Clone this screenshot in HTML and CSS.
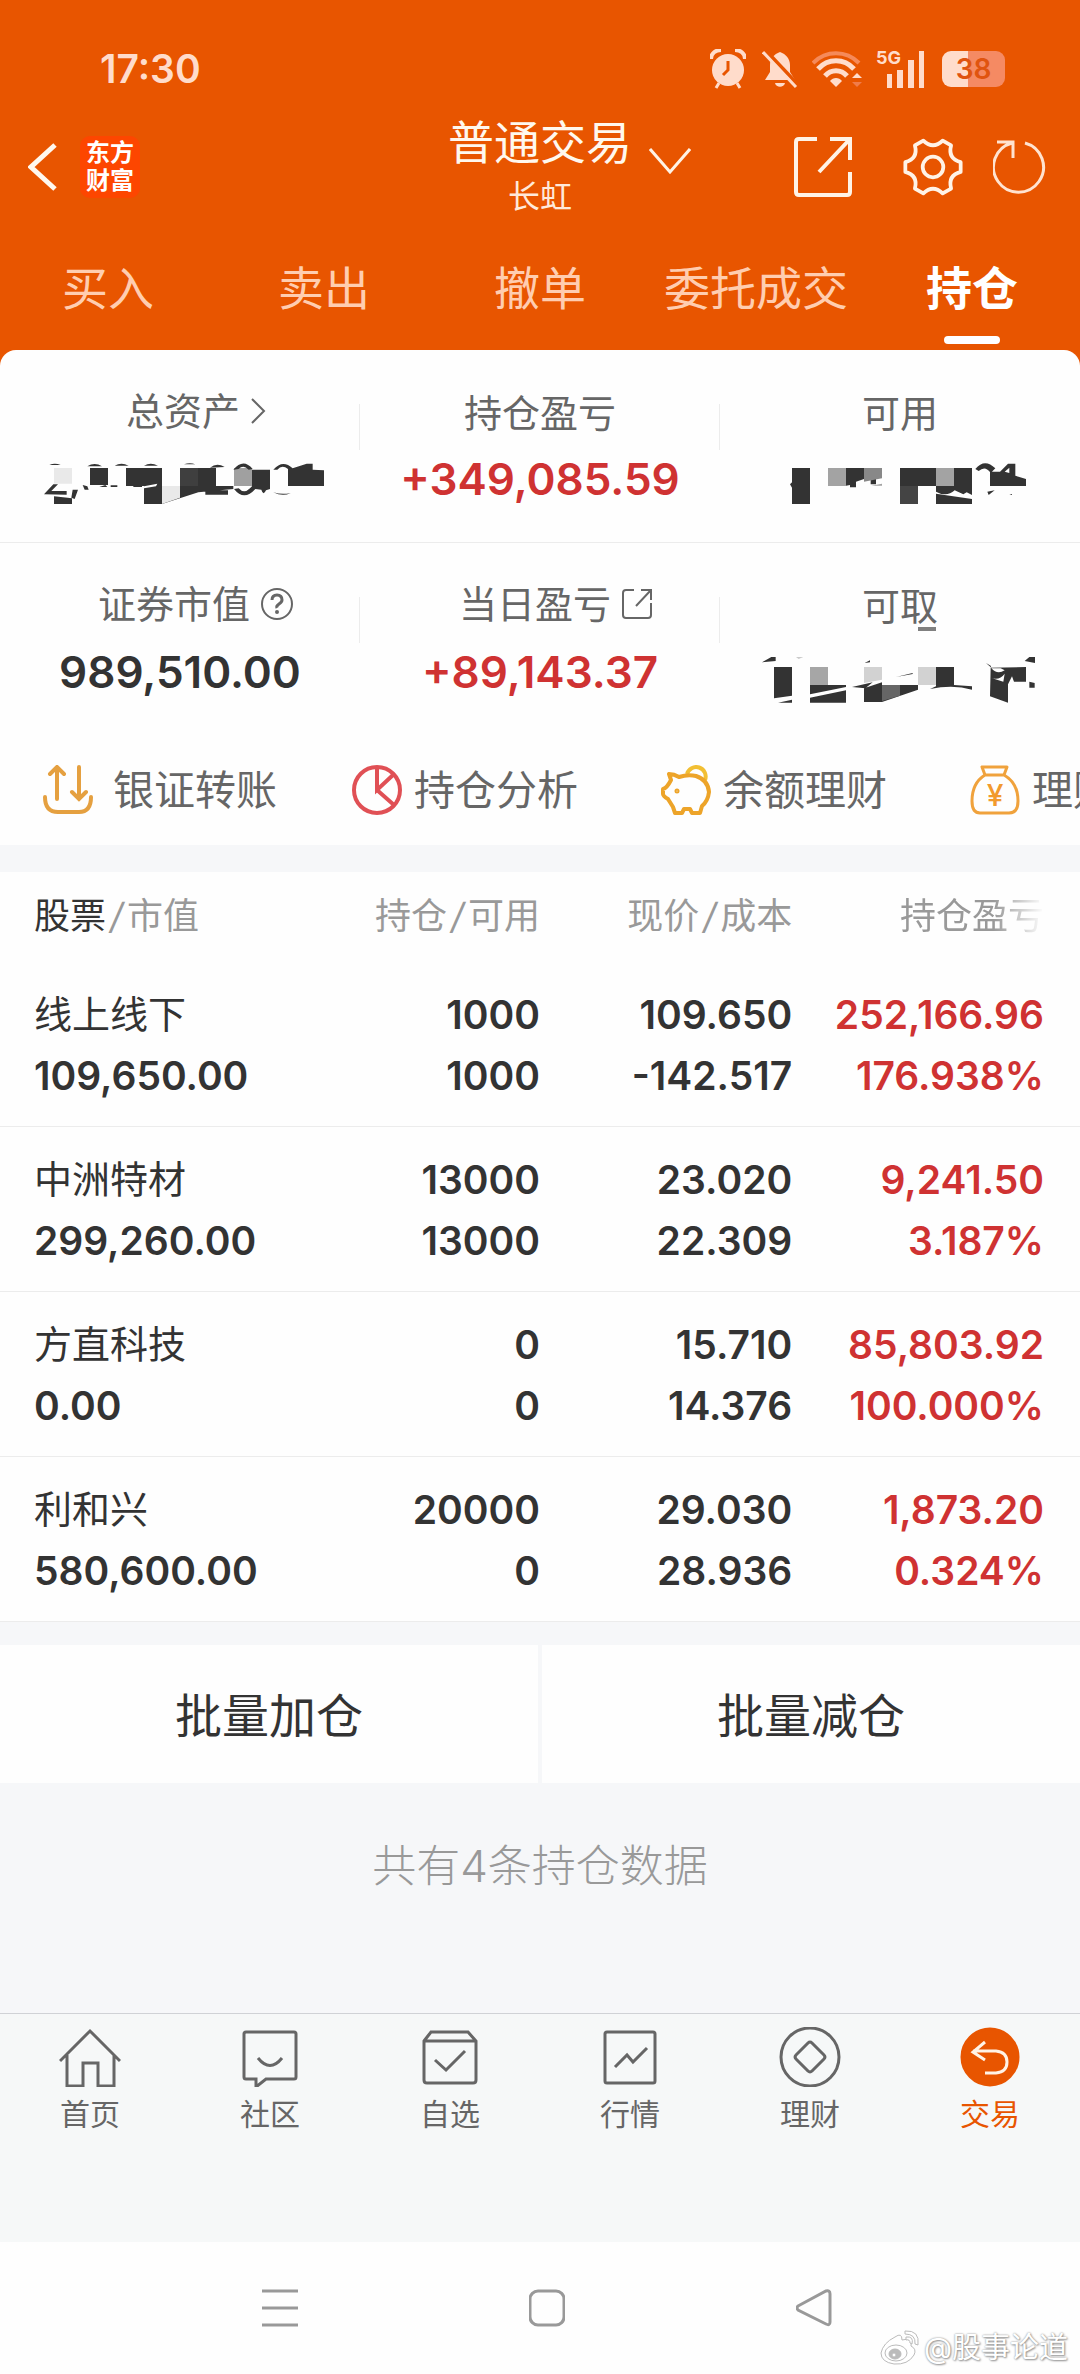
FILE: index.html
```html
<!DOCTYPE html>
<html lang="zh-CN">
<head>
  <meta charset="UTF-8">
  <meta name="viewport" content="width=device-width, initial-scale=1.0">
  <title>普通交易 - 持仓</title>
  <link rel="stylesheet" href="styles.css">
</head>
<body>
  <div class="app">
    <header class="header">
      <div class="status-bar">
        <span class="time">17:30</span>
        <div class="status-icons">
          <svg class="alarm" width="36" height="40" viewBox="0 0 36 40">
            <circle cx="18" cy="21" r="16" fill="#ffdccb"/>
            <path d="M1 10C1 4 6 1 11 1M35 10C35 4 30 1 25 1" fill="none" stroke="#ffdccb" stroke-width="4"/>
            <path d="M9 34L6 39M27 34L30 39" stroke="#ffdccb" stroke-width="3"/>
            <path d="M18 12V21L13 26" fill="none" stroke="#e85500" stroke-width="3"/>
          </svg>
          <svg class="bell" width="36" height="38" viewBox="0 0 36 38">
            <path d="M18 2C24 4 28 9 28 15V22L33 30H3L8 22V15C8 9 12 4 18 2ZM13 33H23C22 38 14 38 13 33Z" fill="#ffdccb"/>
            <path d="M4 1L37 36" stroke="#e85500" stroke-width="4"/>
            <path d="M1 2L34 37" stroke="#ffdccb" stroke-width="3"/>
          </svg>
          <svg class="wifi" width="50" height="38" viewBox="0 0 50 38">
            <path d="M1 13C14 0 34 0 47 13" fill="none" stroke="#f58a5a" stroke-width="4"/>
            <path d="M6 19C16 8 32 8 42 19M13 26C19 19 29 19 35 26" fill="none" stroke="#ffdccb" stroke-width="5"/>
            <path d="M18 31C21 27 27 27 30 31L24 37Z" fill="#ffdccb"/>
            <path d="M40 28L45 23L50 28Z" fill="#ffdccb"/>
            <path d="M40 32L45 37L50 32Z" fill="#f07c4a"/>
          </svg>
          <div class="signal">
            <span>5G</span>
            <svg width="38" height="38" viewBox="0 0 38 38">
              <path d="M1 24H6V38H1ZM11 20H17V38H11ZM22 10H28V38H22ZM33 1H38V38H33Z" fill="#ffdccb"/>
            </svg>
          </div>
          <span class="battery">38</span>
        </div>
      </div>

      <div class="nav-bar">
        <div class="nav-left">
          <button class="icon-btn" aria-label="返回">
            <svg width="30" height="50" viewBox="0 0 30 50"><path d="M27 3L3 25L27 47" fill="none" stroke="#fff8ee" stroke-width="5"/></svg>
          </button>
          <div class="logo">东方<br>财富</div>
        </div>
        <div class="nav-title">
          <h1>普通交易</h1>
          <p>长虹</p>
        </div>
        <div class="nav-right">
          <button class="icon-btn arrow-down" aria-label="切换账户">
            <svg width="42" height="28" viewBox="0 0 42 28"><path d="M1 2L21 25L41 2" fill="none" stroke="#fff3e6" stroke-width="3"/></svg>
          </button>
          <button class="icon-btn share" aria-label="分享">
            <svg width="58" height="60" viewBox="0 0 58 60"><path d="M23 2H5Q2 2 2 5V55Q2 58 5 58H53Q56 58 56 55V35M36 2H56V23M56 2L25 35" fill="none" stroke="#fff3e6" stroke-width="4"/></svg>
          </button>
          <button class="icon-btn settings" aria-label="设置">
            <svg width="60" height="60" viewBox="-2 -2 64 64"><path d="M40.3 1.8L49.3 7Q45.6 21 59.5 24.8V35.2Q45.6 39 49.3 53L40.3 58.2Q30 48 19.7 58.2L10.7 53Q14.4 39 .5 35.2V24.8Q14.4 21 10.7 7L19.7 1.8Q30 12 40.3 1.8Z" fill="none" stroke="#fff3e6" stroke-width="4" stroke-linejoin="round"/><circle cx="30" cy="30" r="11" fill="none" stroke="#fff3e6" stroke-width="4"/></svg>
          </button>
          <button class="icon-btn" aria-label="刷新">
            <svg width="54" height="56" viewBox="0 0 54 56"><path d="M32 4A25 25 0 1 1 19 4M4 3H20V19" fill="none" stroke="#ffe3d0" stroke-width="3"/></svg>
          </button>
        </div>
      </div>

      <nav class="tabs">
        <a href="#">买入</a>
        <a href="#">卖出</a>
        <a href="#">撤单</a>
        <a href="#">委托成交</a>
        <a href="#" class="active">持仓</a>
      </nav>
    </header>

    <div class="panel-wrap">
      <section class="panel">
        <div class="summary">
          <div class="cell">
            <div class="label has-icon">总资产
              <svg width="16" height="26" viewBox="0 0 16 26"><path d="M2 1L14 13L2 25" fill="none" stroke="#666" stroke-width="2"/></svg>
            </div>
            <!-- hidden amount -->
            <svg class="masked" width="310" height="44" viewBox="-15 24 930 132" fill="#333">
              <path d="M58 30Q74 22 92 30ZM172 34Q194 20 216 34ZM254 32Q274 20 296 32ZM342 32Q362 20 384 32ZM462 28Q480 22 496 28ZM540 38Q560 22 584 36Z"/>
              <path d="M180 39H234V90H180ZM288 39H396V93H288ZM558 39V93L610 93V102L505 112L396 147H342V93H450V39ZM526 106H594V119H526ZM42 118L70 88H84L64 108H110V119ZM72 124L126 130V147H72ZM128 104H144L134 132L124 128ZM158 90L172 94L176 104H164ZM208 96L226 90L232 96ZM242 91H262V96H242ZM310 90H336V96H310Z"/>
              <path d="M342 94L382 86L378 94L342 100Z" fill="#fefefe"/>
              <path d="M450 39H504V93H450Z" fill="#3f3f3f"/>
              <path d="M72 39H126V86H72ZM396 93H450V128L396 147Z" fill="#e9e9e9"/>
              <path d="M612 39H666V93H612Z" fill="#a0a0a0"/>
              <path d="M610 44Q640 8 668 42L656 44Q640 28 626 42ZM666 44H720V102L708 106Q700 124 694 104L676 102Q642 140 612 102L626 100Q642 118 660 100L666 94ZM730 44Q758 12 788 40L830 26H848V44L882 46V93H774V42Q756 28 742 44ZM730 112Q756 120 782 114Q758 126 730 112Z"/>
            </svg>
          </div>
          <div class="cell">
            <div class="label">持仓盈亏</div>
            <div class="value red">+349,085.59</div>
          </div>
          <div class="cell">
            <div class="label">可用</div>
            <svg class="masked" width="310" height="44" viewBox="-15 24 930 132" fill="#333">
              <path d="M126 39H180V147H126ZM120 88L126 82V98ZM288 39H342V72L318 80V97H300V90L288 92ZM362 72H378V88H362ZM450 39H666V120L650 112L640 118L614 106Q590 128 558 110V93H450ZM558 116L666 132V147H558ZM676 42Q704 8 736 40L722 54Q706 30 686 48ZM720 50H750L774 26H796V62L828 72V93H720ZM712 110L734 106L716 120ZM778 119L786 117V120Z"/>
              <path d="M764 50L778 38V54Z" fill="#fefefe"/>
              <path d="M234 39H288V93H234ZM558 39H612V93H558ZM364 92L396 86V92Z" fill="#a3a3a3"/>
              <path d="M342 39H396V70L342 80Z" fill="#888"/>
              <path d="M450 93H504V147H450Z" fill="#444"/>
            </svg>
          </div>
        </div>

        <div class="summary">
          <div class="cell">
            <div class="label has-icon">证券市值
              <svg width="34" height="34" viewBox="0 0 34 34" fill="none" stroke="#666" stroke-width="2"><circle cx="17" cy="17" r="15"/><path d="M12 13Q12 8 17 8T22 13Q22 15 19 17T17 21" stroke-width="3"/><circle cx="17" cy="25" r="1"/></svg>
            </div>
            <div class="value">989,510.00</div>
          </div>
          <div class="cell">
            <div class="label has-icon">当日盈亏
              <svg width="32" height="32" viewBox="0 0 32 32" fill="none" stroke="#666" stroke-width="2"><path d="M13 2H5Q2 2 2 5V27Q2 30 5 30H27Q30 30 30 27V15M20 2H30V12M30 2L15 18"/></svg>
            </div>
            <div class="value red">+89,143.37</div>
          </div>
          <div class="cell">
            <div class="label">可取</div>
            <svg class="masked" width="310" height="46" viewBox="-15 225 930 138" fill="#333">
              <path d="M504 138H558V150H504Z" fill="#808080"/>
              <path d="M36 244L64 228H77V240ZM138 230H160L146 232ZM72 258H126V344L72 352ZM84 365L126 356V365ZM180 312H288V318L180 340ZM180 350L288 328V365H180ZM344 246L360 238V244ZM306 318L368 304L346 322ZM342 322L396 304V312H504V326L396 363H342ZM438 288L488 276V279ZM558 258H612V312L666 316V326Q610 310 540 324L558 316ZM722 260L828 258V302H792L786 286L774 310V365L720 346ZM824 240L838 228H855V246ZM838 302L854 306V320H838ZM708 246L722 254L724 260Z"/>
              <path d="M724 262Q742 282 764 268L752 262ZM722 290Q748 300 764 278L760 302Z" fill="#fefefe"/>
              <path d="M180 258H234V312H180Z" fill="#a6a6a6"/>
              <path d="M342 258H396V296L342 306ZM504 258H558V312H504Z" fill="#d2d2d2"/>
              <path d="M396 312H450V344L396 360Z" fill="#666"/>
            </svg>
          </div>
        </div>

        <div class="shortcuts">
          <a href="#" class="transfer">
            <svg width="50" height="50" viewBox="0 0 50 50" fill="none" stroke="#e5a040" stroke-width="4" stroke-linecap="round"><path d="M14 34V3M7 9L14 2L21 9M36 2V34M29 27L36 34L43 27M2 32Q2 47 15 47H36Q48 47 48 32"/></svg>
            银证转账
          </a>
          <a href="#">
            <svg width="50" height="50" viewBox="0 0 50 50" fill="none" stroke="#e05055" stroke-width="4"><circle cx="25" cy="25" r="23"/><path d="M25 2V25L41 10M25 25L42 40"/></svg>
            持仓分析
          </a>
          <a href="#">
            <svg width="50" height="50" viewBox="0 0 50 50" fill="none" stroke-width="4" stroke-linejoin="round"><path d="M26 9A9.500 9.500 0 1 1 44 15" stroke="#f2bf33"/><path d="M8 9Q13 9 18 12Q27 9 35 11Q47 15 48 27Q47 36 41 41L39 48H31L29 44H23L21 48H14L12 42L7 34Q2 31 2 29V24Q6 23 10 15Z" stroke="#eda429"/><circle cx="16" cy="26" r="1" stroke="#eda429" stroke-width="3"/></svg>
            余额理财
          </a>
          <a href="#">
            <svg width="50" height="50" viewBox="0 0 50 50" fill="none" stroke="#f0a23c" stroke-width="3" stroke-linejoin="round"><path d="M12 2H37L34 10H15ZM15 10Q2 18 2 36Q2 48 10 48H39Q48 48 48 36Q48 18 34 10"/><text x="25" y="41" text-anchor="middle" font-size="30" font-weight="500" fill="#f29a2e" stroke="none">¥</text></svg>
            理财产品
          </a>
        </div>
      </section>
    </div>

    <table class="holdings">
      <thead>
        <tr>
          <th><b>股票</b><i>/</i>市值</th>
          <th>持仓<i>/</i>可用</th>
          <th>现价<i>/</i>成本</th>
          <th><span class="fade">持仓盈亏</span></th>
        </tr>
      </thead>
      <tbody>
        <tr>
          <td><span class="name">线上线下</span><br>109,650.00</td>
          <td>1000<br>1000</td>
          <td>109.650<br>-142.517</td>
          <td class="red">252,166.96<br>176.938%</td>
        </tr>
        <tr>
          <td><span class="name">中洲特材</span><br>299,260.00</td>
          <td>13000<br>13000</td>
          <td>23.020<br>22.309</td>
          <td class="red">9,241.50<br>3.187%</td>
        </tr>
        <tr>
          <td><span class="name">方直科技</span><br>0.00</td>
          <td>0<br>0</td>
          <td>15.710<br>14.376</td>
          <td class="red">85,803.92<br>100.000%</td>
        </tr>
        <tr>
          <td><span class="name">利和兴</span><br>580,600.00</td>
          <td>20000<br>0</td>
          <td>29.030<br>28.936</td>
          <td class="red">1,873.20<br>0.324%</td>
        </tr>
      </tbody>
    </table>

    <div class="batch">
      <button>批量加仓</button>
      <button>批量减仓</button>
    </div>

    <p class="total">共有4条持仓数据</p>

    <nav class="tab-bar">
      <a href="#">
        <svg width="62" height="60" viewBox="0 0 62 60"><path d="M1 34L31 4L61 34M8 28V59H24V36H39V59H55V28"/></svg>
        首页
      </a>
      <a href="#">
        <svg width="62" height="60" viewBox="0 0 62 60"><path d="M7 5H55Q57 5 57 7V50Q57 52 55 52H27L17 60V52H7Q5 52 5 50V7Q5 5 7 5ZM19 31Q31 46 43 31"/></svg>
        社区
      </a>
      <a href="#">
        <svg width="62" height="60" viewBox="0 0 62 60"><path d="M5 14L12 5H49L57 14V53Q57 56 54 56H8Q5 56 5 53ZM5 14H57M16 33L27 43L46 24"/></svg>
        自选
      </a>
      <a href="#">
        <svg width="62" height="60" viewBox="0 0 62 60"><path d="M8 5H54Q56 5 56 7V54Q56 56 54 56H8Q6 56 6 54V7Q6 5 8 5ZM16 40L28 28L34 35L48 21"/></svg>
        行情
      </a>
      <a href="#">
        <svg width="62" height="60" viewBox="0 0 62 60"><circle cx="31" cy="30" r="29"/><path d="M29 16Q31 14 33 16L45 28Q47 30 45 32L33 44Q31 46 29 44L17 32Q15 30 17 28Z"/></svg>
        理财
      </a>
      <a href="#" class="active">
        <svg width="62" height="60" viewBox="0 0 62 60"><circle cx="31" cy="30" r="28" fill="#e85500" stroke="#e85500"/><path d="M26 15L14 25L26 33M14 24H37Q48 25 48 35Q48 45 37 46H26" stroke="#fff3e6"/></svg>
        交易
      </a>
    </nav>

    <footer class="system-nav">
      <button class="icon-btn" aria-label="菜单">
        <svg width="36" height="38" viewBox="0 0 36 38"><path d="M0 2H36M0 19H36M0 36H36"/></svg>
      </button>
      <button class="icon-btn" aria-label="主屏幕">
        <svg width="36" height="38" viewBox="0 0 36 38"><rect x="1" y="2" width="34" height="34" rx="8"/></svg>
      </button>
      <button class="icon-btn" aria-label="返回上一级">
        <svg width="36" height="38" viewBox="0 0 36 38"><path d="M2 17L30 2Q34 1 34 5V33Q34 37 30 35L2 21Q0 19 2 17Z"/></svg>
      </button>
      <div class="watermark">
        <svg width="40" height="36" viewBox="0 0 40 36" fill="#fff" stroke="#bbb" stroke-width="1"><path d="M15 7Q22 2 22 10Q33 7 31 16Q37 19 34 25Q28 35 14 34Q1 32 1 23Q3 13 15 7Z"/><ellipse cx="16" cy="23" rx="11" ry="8"/><ellipse cx="15" cy="24" rx="6" ry="5" fill="#bbb"/><circle cx="14" cy="25" r="2"/><path d="M25 1Q40 0 38 15L35 14Q36 4 25 4ZM26 7Q34 6 32 14L30 13Q30 9 26 10Z"/></svg>
        @股事论道
      </div>
    </footer>
  </div>
</body>
</html>
```
FILE: styles.css
```css
* {
  box-sizing: border-box;
}
body {
  margin: 0;
  font-family: Inter, "Noto Sans CJK SC", sans-serif;
  color: #333;
  background-color: #f6f7f9;
}
h1, p {
  margin: 0;
  font-weight: normal;
}
a {
  color: inherit;
  text-decoration: none;
}
button {
  font-family: inherit;
  color: inherit;
  border: none;
  padding: 0;
  background: none;
  cursor: pointer;
}
svg {
  display: block;
  flex: none;
}
.app {
  display: flex;
  flex-direction: column;
  min-height: 100vh;
}
.red {
  color: #cf3232;
}
.icon-btn {
  display: block;
}

/* header */
.header {
  background-color: #e85500;
  color: #fff8ee;
}
.status-bar {
  display: flex;
  justify-content: space-between;
  align-items: center;
  height: 117px;
  padding: 20px 75px 0 100px;
}
.time {
  font-size: 39px;
  font-weight: 600;
  color: #ffdccb;
}
.status-icons {
  display: flex;
  align-items: center;
}
.bell {
  margin-left: 16px;
}
.wifi {
  margin-left: 14px;
}
.signal {
  position: relative;
  margin-left: 24px;
}
.signal span {
  position: absolute;
  left: -10px;
  top: -3px;
  font-size: 18px;
  line-height: 22px;
  font-weight: 700;
  color: #ffdccb;
}
.battery {
  width: 63px;
  height: 36px;
  margin-left: 18px;
  border-radius: 9px;
  background: linear-gradient(90deg, #ffdccb 26px, #f58a63 26px);
  color: #e0540f;
  font-size: 28px;
  line-height: 36px;
  font-weight: 600;
  text-align: center;
}
.nav-bar {
  display: grid;
  grid-template-columns: 1fr auto 1fr;
  align-items: center;
}
.nav-left {
  display: flex;
  align-items: center;
  padding-left: 28px;
  gap: 22px;
}
.logo {
  width: 60px;
  height: 62px;
  padding-top: 3px;
  border-radius: 10px;
  background-color: #fd4600;
  color: #fff;
  font-size: 24px;
  line-height: 28px;
  font-weight: 700;
  text-align: center;
}
.nav-title {
  text-align: center;
}
.nav-title h1 {
  font-size: 46px;
  line-height: 50px;
}
.nav-title p {
  margin-top: 11px;
  font-size: 32px;
  line-height: 38px;
  color: #ffe9da;
}
.nav-right {
  display: flex;
  align-items: center;
  padding: 0 33px 0 17px;
}
.arrow-down {
  margin-bottom: 12px;
}
.share {
  margin-left: auto;
}
.settings {
  margin: 0 30px 0 51px;
}
.tabs {
  display: flex;
  padding-top: 42px;
}
.tabs a {
  flex: 1 1 0;
  height: 92px;
  font-size: 46px;
  line-height: 60px;
  text-align: center;
  white-space: nowrap;
  color: #ffcdb0;
}
.tabs .active {
  color: #fff;
  font-weight: 700;
}
.tabs .active::after {
  content: "";
  display: block;
  width: 56px;
  height: 8px;
  margin: 18px auto 0;
  border-radius: 4px;
  background-color: #fff;
}

/* assets */
.panel-wrap {
  background-color: #e85500;
}
.panel {
  border-radius: 16px 16px 0 0;
  background-color: #fefefe;
}
.summary {
  display: grid;
  grid-template-columns: repeat(3, 1fr);
}
.summary:first-child {
  border-bottom: 1px solid #ececec;
}
.cell {
  display: flex;
  flex-direction: column;
  align-items: center;
  height: 192px;
  padding-top: 43px;
  background: linear-gradient(#ececec, #ececec) right 54px / 1px 46px no-repeat;
}
.cell:last-child {
  background: none;
}
.label {
  display: flex;
  align-items: center;
  gap: 10px;
  font-size: 38px;
  line-height: 40px;
  color: #666;
}
.has-icon {
  margin-bottom: 4px;
  padding-left: 32px;
  line-height: 36px;
}
.value {
  margin-top: 22px;
  font-size: 44px;
  line-height: 48px;
  font-weight: 600;
}
.masked {
  margin-top: 30px;
  overflow: visible;
}
.shortcuts {
  display: grid;
  grid-auto-flow: column;
  grid-auto-columns: 309px;
  align-items: center;
  height: 110px;
  padding-left: 43px;
  overflow: hidden;
}
.shortcuts a {
  display: flex;
  align-items: center;
  gap: 12px;
  font-size: 41px;
  line-height: 48px;
  color: #666;
}
.shortcuts .transfer {
  gap: 20px;
}

/* holdings */
.holdings {
  width: 100%;
  margin-top: 27px;
  table-layout: fixed;
  border-collapse: collapse;
  background-color: #fefefe;
}
.holdings th {
  padding: 22px 0 24px;
  font-size: 36px;
  line-height: 44px;
  font-weight: normal;
  text-align: right;
  color: #999;
}
.holdings th b {
  font-weight: normal;
  color: #333;
}
.holdings th i {
  margin: 0 4px;
}
.fade {
  -webkit-mask-image: linear-gradient(90deg, #000 65%, transparent);
  mask-image: linear-gradient(90deg, #000 65%, transparent);
}
.holdings td {
  padding: 21px 0 20px;
  border-bottom: 1px solid #ececec;
  font-size: 39px;
  line-height: 61px;
  font-weight: 600;
  text-align: right;
}
.holdings tr > :first-child {
  width: 26%;
  padding-left: 34px;
  text-align: left;
}
.holdings tr > :nth-child(2) {
  width: 24%;
}
.holdings tr > :nth-child(3) {
  width: 24%;
  padding-right: 7px;
}
.holdings tr > :last-child {
  padding-right: 36px;
}
.name {
  font-size: 38px;
  font-weight: normal;
}
.batch {
  display: flex;
  gap: 4px;
  margin-top: 23px;
}
.batch button {
  flex: 1;
  height: 138px;
  padding-bottom: 4px;
  background-color: #fefefe;
  font-size: 47px;
}
.total {
  flex: 1;
  padding: 53px 0 110px;
  font-size: 44px;
  line-height: 60px;
  font-weight: 300;
  text-align: center;
  color: #999;
}

/* bottom bars */
.tab-bar {
  display: flex;
  padding: 13px 0 110px;
  border-top: 1px solid #d0d2d6;
  background-color: #f6f8f8;
}
.tab-bar a {
  flex: 1;
  display: flex;
  flex-direction: column;
  align-items: center;
  gap: 9px;
  font-size: 30px;
  line-height: 36px;
  color: #666;
}
.tab-bar svg {
  fill: none;
  stroke: #666;
  stroke-width: 3px;
}
.tab-bar .active {
  color: #e85500;
}
.system-nav {
  position: relative;
  display: flex;
  justify-content: center;
  align-items: center;
  gap: 231px;
  height: 132px;
  padding-left: 14px;
  background-color: #fefefe;
}
.system-nav .icon-btn svg {
  fill: none;
  stroke: #999;
  stroke-width: 3px;
}
.watermark {
  position: absolute;
  right: 12px;
  bottom: 8px;
  display: flex;
  align-items: center;
  gap: 4px;
  font-size: 29px;
  line-height: 36px;
  color: #fff;
  text-shadow: 0 0 2px #888, 1px 1px 2px #999;
}
```
